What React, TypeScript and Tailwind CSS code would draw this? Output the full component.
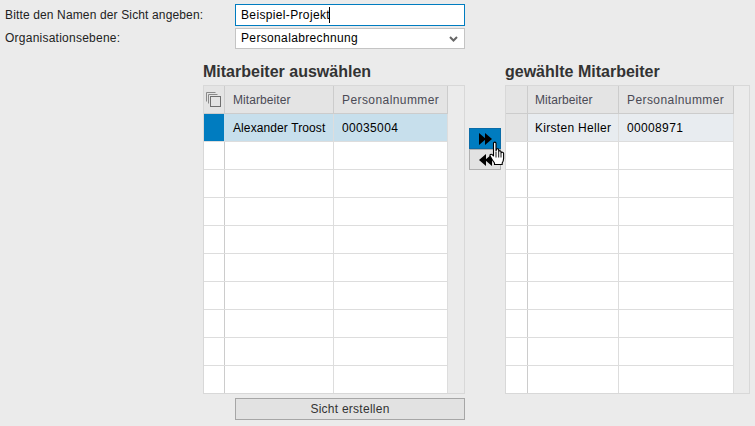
const font = "font-['Liberation_Sans',Arial,sans-serif]";

const rows = Array.from({ length: 10 });

function SelectAllIcon() {
  return (
    <svg width="16" height="16" viewBox="0 0 16 16" fill="none" strokeWidth="1">
      <path d="M0.5 9.5V0.5H9.5" stroke="#8a8a8a" />
      <path d="M2.5 11.5V2.5H11.5" stroke="#8a8a8a" />
      <rect x="4.5" y="4.5" width="10" height="10" stroke="#6f6f6f" />
    </svg>
  );
}

function Table({
  name,
  nameTrack,
  namePad,
  selected,
  widths,
  outer,
  scroll,
  showIcon,
  marker,
  rowBg,
}: {
  name: string;
  nameTrack: string;
  namePad: string;
  selected: string;
  widths: string[];
  outer: string;
  scroll: string;
  showIcon?: boolean;
  marker: string;
  rowBg: string;
}) {
  return (
    <div className={`flex shrink-0 border border-[#d8d8d8] ${outer}`}>
      <div className="flex flex-col">
        <div className="flex h-[28px] bg-[#e4e4e4] border-b border-[#cccccc] text-[#4a4a55]">
          <div className={`${widths[0]} flex items-center justify-center border-r border-[#cccccc]`}>
            {showIcon && <SelectAllIcon />}
          </div>
          <div className={`${widths[1]} flex items-center ${namePad} border-r border-[#cccccc] tracking-[0.08px]`}>Mitarbeiter</div>
          <div className={`${widths[2]} flex items-center pl-[8px] border-r border-[#cccccc] tracking-[0.42px]`}>Personalnummer</div>
        </div>
        {rows.map((_, i) => (
          <div
            key={i}
            className={`flex ${i < 9 ? "h-[28px] border-b border-[#dddddd]" : "h-[27px]"} ${i === 0 ? `${rowBg} text-black` : "bg-white"}`}
          >
            <div className={`${widths[0]} border-r ${i === 0 ? marker : "border-[#cccccc]"}`} />
            <div className={`${widths[1]} flex items-center ${namePad} border-r border-[#dddddd] ${nameTrack}`}>
              {i === 0 ? name : ""}
            </div>
            <div className={`${widths[2]} flex items-center pl-[8px] border-r border-[#dddddd]`}>{i === 0 ? selected : ""}</div>
          </div>
        ))}
      </div>
      <div className={`${scroll} bg-[#ebebeb]`} />
    </div>
  );
}

function Arrows({ dir }: { dir: "right" | "left" }) {
  const d = dir === "right" ? "M0 0L7 6L0 12ZM6 0L13 6L6 12Z" : "M7 0L0 6L7 12ZM13 0L6 6L13 12Z";
  return (
    <svg width="13" height="12" viewBox="0 0 13 12">
      <path d={d} fill="#000" />
    </svg>
  );
}

function HandCursor() {
  return (
    <svg width="16" height="25" viewBox="0 0 16 25" className="absolute left-[20px] top-[13px]">
      <path
        d="M4.5 2.2C4.5 0.8 7 0.8 7 2.2V10L7.4 8.6C7.8 7.4 9.6 7.6 9.7 9V10.6C10 9.4 11.8 9.6 12 10.8V11.8C12.4 10.8 14.5 11 14.6 12.4V17.5C14.6 19.5 14 20.6 13.2 22V23.5H5.5V22C4 20 2.6 17.8 1.2 15.2C0.4 13.8 2 12.6 3.2 13.6L4.5 15Z"
        fill="#fff"
        stroke="#000"
        strokeWidth="1.1"
        strokeLinejoin="round"
      />
      <path d="M7 11V16.5M9.7 11V16.5M12 12V16.5" stroke="#000" strokeWidth="0.9" />
    </svg>
  );
}

export default function App() {
  return (
    <div className={`${font} relative w-[755px] h-[426px] overflow-hidden bg-[#ebebeb] text-[12px] text-[#222] tracking-[0.35px] pl-[5px] pt-[4px]`}>
      <div className="flex items-center h-[22px]">
        <label className="w-[230px] tracking-[0.14px]">Bitte den Namen der Sicht angeben:</label>
        <div className="flex items-center w-[230px] h-[22px] bg-white border border-[#007cc0] pl-[5px] text-black">
          Beispiel-Projekt<span className="w-px h-[16px] bg-black -ml-[1px]" />
        </div>
      </div>
      <div className="flex items-center h-[21px] mt-[2px] pb-[2px]">
        <label className="w-[230px] tracking-[0.24px]">Organisationsebene:</label>
        <div className="flex items-center justify-between w-[230px] h-[21px] -mb-[2px] bg-white border border-[#c4c4c4] pl-[5px] pr-[6px] pb-[2px] text-black">
          Personalabrechnung
          <svg width="9" height="6" viewBox="0 0 9 6" fill="none" stroke="#666" strokeWidth="2" className="mt-[2px]">
            <path d="M1 1L4.5 4.5L8 1" />
          </svg>
        </div>
      </div>

      <div className="flex ml-[198px] mt-[12px]">
        <div className="flex flex-col w-[262px]">
          <h2 className="h-[24px] text-[16px] leading-[22px] font-bold text-[#333] tracking-normal">Mitarbeiter auswählen</h2>
          <Table
            name="Alexander Troost"
            nameTrack="tracking-[0.1px]"
            namePad="pl-[8px]"
            selected="00035004"
            widths={["w-[21px]", "w-[109px]", "w-[114px]"]}
            outer="w-[262px]"
            scroll="w-[16px]"
            showIcon
            marker="bg-[#007cc0] border-[#c7dfec]"
            rowBg="bg-[#c7dfec]"
          />
          <button className="self-end w-[230px] h-[22px] mt-[4px] bg-[#e2e2e2] border border-[#a6a6a6] text-[#333] tracking-[0.25px]">
            Sicht erstellen
          </button>
        </div>

        <div className="relative flex flex-col w-[32px] ml-[4px] mt-[67px]">
          <div className="flex items-center justify-center h-[21px] bg-[#007cc0] border border-[#0a6ca8]">
            <Arrows dir="right" />
          </div>
          <div className="flex items-center justify-center h-[21px] bg-[#e2e2e2] border border-[#b0b0b0]">
            <Arrows dir="left" />
          </div>
          <HandCursor />
        </div>

        <div className="flex flex-col w-[245px] ml-[4px]">
          <h2 className="h-[24px] text-[16px] leading-[22px] font-bold text-[#333] tracking-normal">gewählte Mitarbeiter</h2>
          <Table
            name="Kirsten Heller"
            nameTrack="tracking-[0.3px]"
            namePad="pl-[7px]"
            selected="00008971"
            widths={["w-[22px]", "w-[91px]", "w-[115px]"]}
            outer="w-[245px]"
            scroll="w-[15px]"
            marker="bg-[#e4e4e4] border-[#cccccc]"
            rowBg="bg-[#e8ecf0]"
          />
        </div>
      </div>
    </div>
  );
}
